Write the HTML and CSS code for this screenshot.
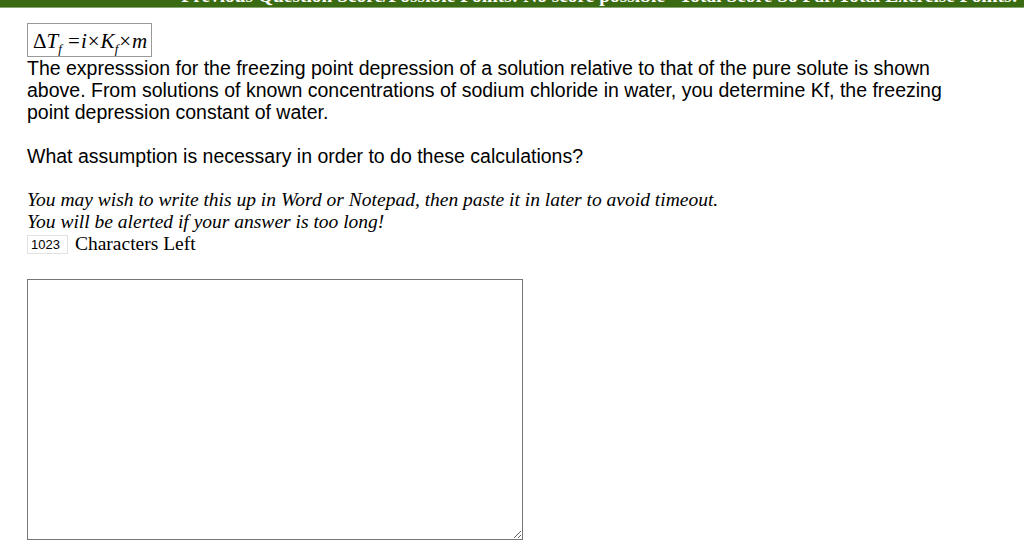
FILE: index.html
```html
<!DOCTYPE html>
<html>
<head>
<meta charset="utf-8">
<link rel="stylesheet" href="styles.css">
</head>
<body>
<div class="topbar"><span class="topbar-text">Previous Question Score/Possible Points: No score possible &nbsp; Total Score So Far/Total Exercise Points:</span></div>
<main class="content">
  <div class="formula"><span class="up">Δ</span><span class="mi">T</span><sub class="sub">f</sub> <span class="op">=</span><span class="mi">i</span><span class="op">×</span><span class="mi">K</span><sub class="sub">f</sub><span class="op">×</span><span class="mi">m</span></div>
  <p class="question">The expresssion for the freezing point depression of a solution relative to that of the pure solute is shown above. From solutions of known concentrations of sodium chloride in water, you determine Kf, the freezing point depression constant of water.</p>
  <p class="question ask">What assumption is necessary in order to do these calculations?</p>
  <p class="note">You may wish to write this up in Word or Notepad, then paste it in later to avoid timeout.<br>You will be alerted if your answer is too long!</p>
  <div class="counter"><span class="count">1023</span><span class="count-label">Characters Left</span></div>
  <textarea class="answer"></textarea>
</main>
</body>
</html>
```
FILE: styles.css
```css
html, body {
  margin: 0;
  padding: 0;
  background: #fff;
}
.topbar {
  height: 7px;
  background: #3a6b12;
  border-bottom: 1px solid #8aa874;
  overflow: hidden;
  text-align: right;
  padding-right: 6px;
}
.topbar-text {
  display: block;
  font-family: "Liberation Serif", serif;
  font-weight: bold;
  font-size: 19.4px;
  line-height: 19px;
  color: #fff;
  margin-top: -14px;
  white-space: nowrap;
}
.content {
  padding: 15px 0 0 27px;
}
.formula {
  display: inline-block;
  border: 1px solid #999;
  padding: 3px 4px 1px 5px;
  font-family: "Liberation Serif", serif;
  font-size: 21px;
  line-height: 28px;
  color: #000;
}
.formula .mi {
  font-style: italic;
}
.formula .up {
  font-style: normal;
}
.formula .sub {
  font-style: italic;
  font-size: 13px;
  vertical-align: -5px;
  line-height: 0;
}
.formula .op {
  padding: 0 1px;
}
.question {
  margin: 0;
  font-family: "Liberation Sans", Arial, sans-serif;
  font-size: 19.5px;
  line-height: 22px;
  color: #000;
  max-width: 935px;
}
.ask {
  margin-top: 22px;
}
.note {
  margin: 22px 0 0 0;
  font-family: "Liberation Serif", serif;
  font-style: italic;
  font-size: 19.5px;
  line-height: 22px;
  color: #000;
}
.counter {
  display: flex;
  align-items: center;
  gap: 7px;
  height: 22px;
}
.count {
  display: inline-block;
  border: 1px solid #e2e2e2;
  font-family: "Liberation Sans", Arial, sans-serif;
  font-size: 13px;
  line-height: 17px;
  padding: 0 7px 0 3px;
  color: #000;
}
.count-label {
  font-family: "Liberation Serif", serif;
  font-size: 19.5px;
  color: #000;
}
.answer {
  display: block;
  margin-top: 24px;
  width: 496px;
  height: 261px;
  box-sizing: border-box;
  border: 1px solid #767676;
  padding: 2px;
  resize: both;
}
```
